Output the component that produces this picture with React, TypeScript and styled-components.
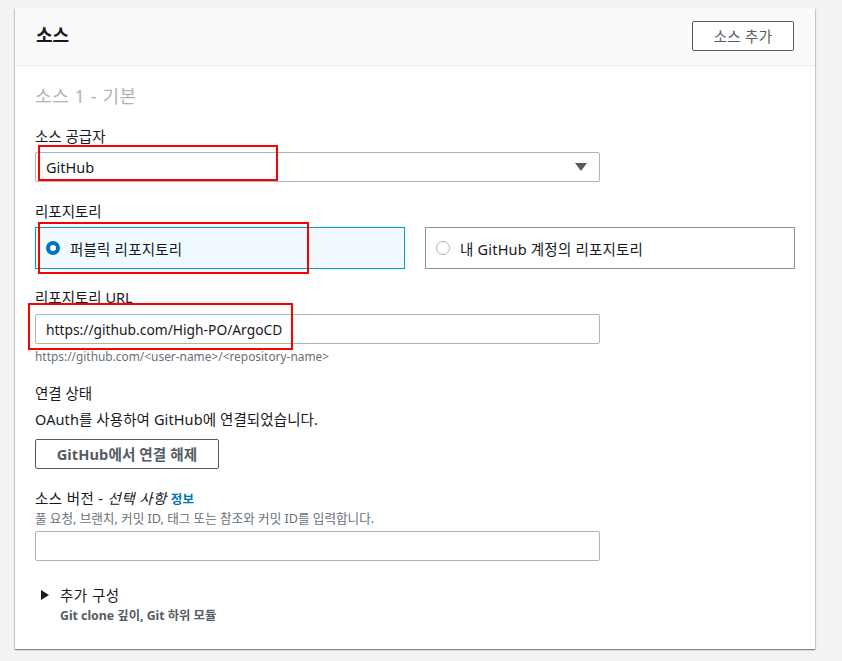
import React from "react";
import styled, { createGlobalStyle } from "styled-components";

const Global = createGlobalStyle`
  html, body { margin: 0; padding: 0; background: #f2f3f3; }
  body { font-family: "Noto Sans", "Noto Sans CJK KR", sans-serif; color: #16191f; }
  * { box-sizing: border-box; }
`;

const Page = styled.div`
  padding: 8px 0 0 15px;
  width: 842px;
  height: 661px;
`;

const Card = styled.div`
  position: relative;
  width: 800px;
  height: 641px;
  background: #fff;
  box-shadow: 0 1px 1px 0 rgba(0, 28, 36, 0.3), 1px 1px 1px 0 rgba(0, 28, 36, 0.15), -1px 1px 1px 0 rgba(0, 28, 36, 0.15);
  display: flex;
  flex-direction: column;
`;

const Header = styled.div`
  height: 58px;
  background: #fafafa;
  border-bottom: 1px solid #eaeded;
  display: flex;
  align-items: center;
  justify-content: space-between;
  padding: 0 21px;
`;

const Title = styled.h2`
  margin: 0;
  font-size: 18px;
  font-weight: 700;
  line-height: 24px;
  margin-top: -4px;
`;

const OutlineButton = styled.button<{ $bold?: boolean }>`
  height: 30px;
  padding: 0;
  border: 1px solid #545b64;
  border-radius: 2px;
  background: #fff;
  color: #545b64;
  font-family: inherit;
  font-size: 14.5px;
  font-weight: ${(p) => (p.$bold ? 700 : 400)};
  line-height: 20px;
  cursor: pointer;
`;

const HeaderButton = styled(OutlineButton)`
  width: 102px;
  margin-top: -2px;
  letter-spacing: 0.3px;
`;

const Body = styled.div`
  display: flex;
  flex-direction: column;
  padding: 18px 20px 0 20px;
`;

const Subtitle = styled.div`
  font-size: 18px;
  font-weight: 400;
  line-height: 24px;
  letter-spacing: 0.6px;
  color: #aab7b8;
`;

const Label = styled.div<{ $mt?: number; $ls?: number }>`
  font-size: 14.5px;
  line-height: 20px;
  letter-spacing: ${(p) => p.$ls ?? 0}px;
  margin-top: ${(p) => p.$mt ?? 0}px;
`;

const Italic = styled.i`
  font-style: italic;
`;

const InfoLink = styled.a`
  color: #0073bb;
  font-weight: 700;
  font-size: 12.5px;
  text-decoration: none;
  margin-left: 4px;
`;

const Hint = styled.div<{ $mt?: number; $size?: number }>`
  font-size: ${(p) => p.$size ?? 12}px;
  line-height: 16px;
  color: #687078;
  margin-top: ${(p) => p.$mt ?? 0}px;
`;

const Text = styled.div<{ $mt?: number }>`
  font-size: 14.5px;
  line-height: 20px;
  letter-spacing: 0.1px;
  margin-top: ${(p) => p.$mt ?? 0}px;
`;

const Select = styled.div<{ $mt?: number }>`
  width: 565px;
  height: 30px;
  margin-top: ${(p) => p.$mt ?? 0}px;
  border: 1px solid #aab7b8;
  border-radius: 2px;
  display: flex;
  align-items: center;
  justify-content: space-between;
  padding: 0 12px 0 10px;
  font-size: 14.5px;
`;

const Caret = styled.span`
  width: 0;
  height: 0;
  border-left: 6px solid transparent;
  border-right: 6px solid transparent;
  border-top: 8px solid #545b64;
`;

const Input = styled.div<{ $mt?: number }>`
  width: 565px;
  height: 30px;
  margin-top: ${(p) => p.$mt ?? 0}px;
  border: 1px solid #aab7b8;
  border-radius: 2px;
  display: flex;
  align-items: center;
  padding: 0 10px;
  font-size: 13.8px;
`;

const TileRow = styled.div<{ $mt?: number }>`
  display: grid;
  grid-template-columns: 370px 370px;
  gap: 20px;
  margin-top: ${(p) => p.$mt ?? 0}px;
`;

const Tile = styled.div<{ $checked?: boolean }>`
  height: 42px;
  border: 1px solid ${(p) => (p.$checked ? "#00a1c9" : "#879596")};
  background: ${(p) => (p.$checked ? "#f1faff" : "#fff")};
  display: flex;
  align-items: center;
  gap: 10px;
  padding: 0 10px;
  font-size: 14.5px;
  letter-spacing: 0.2px;
`;

const Radio = styled.span<{ $checked?: boolean }>`
  width: 14px;
  height: 14px;
  border-radius: 50%;
  border: ${(p) => (p.$checked ? "4px solid #0073bb" : "1px solid #aab7b8")};
  background: #fff;
  flex-shrink: 0;
`;

const ActionButton = styled(OutlineButton)`
  width: 184px;
  align-self: flex-start;
  font-size: 14.6px;
  letter-spacing: 0.1px;
`;

const Expander = styled.div`
  display: flex;
  gap: 11px;
  margin-top: 24px;
  padding-left: 6px;
`;

const Triangle = styled.span`
  width: 0;
  height: 0;
  border-top: 5px solid transparent;
  border-bottom: 5px solid transparent;
  border-left: 8px solid #16191f;
  margin-top: 5px;
`;

const ExpanderText = styled.div`
  display: flex;
  flex-direction: column;
`;

const ExpanderTitle = styled.div`
  font-size: 14.5px;
  line-height: 20px;
  letter-spacing: 0.5px;
`;

const ExpanderSub = styled.div`
  font-size: 12.3px;
  line-height: 18px;
  font-weight: 700;
  color: #545b64;
  margin-top: 2px;
`;

const Annotation = styled.div`
  position: absolute;
  border: 2px solid #ff0000;
  pointer-events: none;
`;

export default function App() {
  return (
    <>
      <Global />
      <Page>
        <Card>
          <Header>
            <Title>소스</Title>
            <HeaderButton>소스 추가</HeaderButton>
          </Header>
          <Body>
            <Subtitle>소스 1 - 기본</Subtitle>
            <Label $mt={18}>소스 공급자</Label>
            <Select $mt={6}>
              <span>GitHub</span>
              <Caret />
            </Select>
            <Label $mt={19}>리포지토리</Label>
            <TileRow $mt={6}>
              <Tile $checked>
                <Radio $checked />
                <span>퍼블릭 리포지토리</span>
              </Tile>
              <Tile>
                <Radio />
                <span>내 GitHub 계정의 리포지토리</span>
              </Tile>
            </TileRow>
            <Label $mt={18}>리포지토리 URL</Label>
            <Input $mt={7}>https://github.com/High-PO/ArgoCD</Input>
            <Hint $mt={4} $size={11.9}>https://github.com/&lt;user-name&gt;/&lt;repository-name&gt;</Hint>
            <Label $mt={19}>연결 상태</Label>
            <Text $mt={6}>OAuth를 사용하여 GitHub에 연결되었습니다.</Text>
            <ActionButton $bold style={{ marginTop: 10 }}>GitHub에서 연결 해제</ActionButton>
            <Label $mt={19} $ls={0.4}>
              소스 버전 - <Italic>선택 사항</Italic>
              <InfoLink>정보</InfoLink>
            </Label>
            <Hint $mt={1} $size={12.6}>풀 요청, 브랜치, 커밋 ID, 태그 또는 참조와 커밋 ID를 입력합니다.</Hint>
            <Input $mt={4} />
            <Expander>
              <Triangle />
              <ExpanderText>
                <ExpanderTitle>추가 구성</ExpanderTitle>
                <ExpanderSub>Git clone 깊이, Git 하위 모듈</ExpanderSub>
              </ExpanderText>
            </Expander>
          </Body>
          <Annotation style={{ left: 23, top: 137, width: 240, height: 36 }} />
          <Annotation style={{ left: 23, top: 214, width: 271, height: 52 }} />
          <Annotation style={{ left: 13, top: 295, width: 265, height: 47 }} />
        </Card>
      </Page>
    </>
  );
}
